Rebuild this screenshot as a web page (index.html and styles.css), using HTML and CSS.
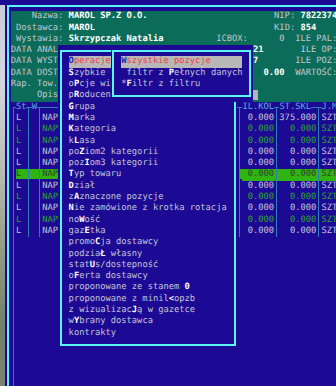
FILE: index.html
```html
<!DOCTYPE html>
<html lang="pl">

<head>
    <meta charset="UTF-8">
    <meta name="viewport" content="width=device-width, initial-scale=1.0">
    <title>Towary</title>
    <link rel="stylesheet" href="styles.css">
</head>

<body>
    <div class="screen">
        <div class="frame">
            <!-- naglowek dokumentu -->
            <div class="info">
                <div class="row">    <span>Nazwa:</span> <b>MAROL SP.Z O.O.</b>                        <span>NIP:</span> <b>7822374</b></div>
                <div class="row"> <span>Dostawca:</span> <b>MAROL</b>                                  <span>KID:</span> <b>854</b></div>
                <div class="row"> <span>Wystawia:</span> <b>Skrzypczak Natalia</b>          <span>ICBOX:</span>      <span>0</span>  <span>ILE PAL:</span></div>
                <div class="row"><span>DATA ANAL</span>                                     <b>21</b>       <span>ILE OP:</span></div>
                <div class="row"><span>DATA WYST</span>                                     <b>7</b>       <span>ILE POZ:</span></div>
                <div class="row"><span>DATA DOST</span>                                       <b>0.00</b>  <span>WARTOŚĆ:</span></div>
                <div class="row"><span>Rap. Tow.</span></div>
                <div class="row">     <span>Opis</span>                                     <span class="cur"> </span></div>
            </div>

            <!-- lista pozycji -->
            <div class="lower">
                <div class="table">
                    <div class="row thead"> <span class="th">St</span> <span class="th">W</span>                                       <span class="th">IL.KOL</span> <span class="th">ST.SKL</span>  <span class="th">J.M</span></div>
                    <div class="row"> <span>L    NAP</span>                                    <span>0.000 375.000 SZT</span></div>
                    <div class="row ok"> <span>L    NAP</span>                                    <span>0.000   0.000 SZT</span></div>
                    <div class="row ok"> <span>L    NAP</span>                                    <span>0.000   0.000 SZT</span></div>
                    <div class="row"> <span>L    NAP</span>                                    <span>0.000   0.000 SZT</span></div>
                    <div class="row"> <span>L    NAP</span>                                    <span>0.000   0.000 SZT</span></div>
                    <div class="row sel"> <span class="hi">L    NAP</span>                                  <span class="half"> </span><span class="hi"> 0.000   0.000 SZT</span></div>
                    <div class="row"> <span>L    NAP</span>                                    <span>0.000   0.000 SZT</span></div>
                    <div class="row ok"> <span>L    NAP</span>                                    <span>0.000   0.000 SZT</span></div>
                    <div class="row"> <span>L    NAP</span>                                    <span>0.000   0.000 SZT</span></div>
                    <div class="row ok"> <span>L    NAP</span>                                    <span>0.000   0.000 SZT</span></div>
                    <div class="row"> <span>L    NAP</span>                                    <span>0.000   0.000 SZT</span></div>
                </div>
            </div>
        </div>

        <!-- menu Operacje -->
        <div class="menu">
            <div class="box">
                <div class="mrow hl"><span class="hk">O</span>peracje</div>
                <div class="mrow"><b>S</b>zybkie</div>
                <div class="mrow">o<b>P</b>cje wi</div>
                <div class="mrow">p<b>R</b>oducen</div>
                <div class="mrow"><b>G</b>rupa</div>
                <div class="mrow"><b>M</b>arka</div>
                <div class="mrow"><b>K</b>ategoria</div>
                <div class="mrow">k<b>L</b>asa</div>
                <div class="mrow">po<b>Z</b>iom2 kategorii</div>
                <div class="mrow">poz<b>I</b>om3 kategorii</div>
                <div class="mrow"><b>T</b>yp towaru</div>
                <div class="mrow"><b>D</b>ział</div>
                <div class="mrow">z<b>A</b>znaczone pozycje</div>
                <div class="mrow"><b>N</b>ie zamówione z krotka rotacja</div>
                <div class="mrow">no<b>W</b>ość</div>
                <div class="mrow">gaz<b>E</b>tka</div>
                <div class="mrow">promo<b>C</b>ja dostawcy</div>
                <div class="mrow">podzia<b>Ł</b> własny</div>
                <div class="mrow">stat<b>U</b>s/dostepność</div>
                <div class="mrow">o<b>F</b>erta dostawcy</div>
                <div class="mrow">proponowane ze stanem <b>0</b></div>
                <div class="mrow">proponowane z minil<b>&lt;</b>opzb</div>
                <div class="mrow">z wizualizac<b>J</b>ą w gazetce</div>
                <div class="mrow">w<b>Y</b>brany dostawca</div>
                <div class="mrow">kontrakty</div>
            </div>
        </div>

        <!-- podmenu -->
        <div class="menu sub">
            <div class="box">
                <div class="mrow hl"><span class="hk">W</span>szystkie pozycje</div>
                <div class="mrow"> filtr z <b>P</b>ełnych danych</div>
                <div class="mrow">*<b>F</b>iltr z filtru</div>
            </div>
        </div>
    </div>
</body>

</html>
```

FILE: styles.css
```css
* {
    margin: 0;
    padding: 0;
    box-sizing: border-box;
}

:root {
    --cw: 5.27px;
    --rh: 11.3px;
    --navy: #1d0a94;
    --teal: #0c6c5a;
    --cyan: #5cf4f4;
    --text: #c4c4d4;
    --line: #2f7cb8;
    --head: #58aee0;
    --ok: #2aa52a;
    --sel: #30b412;
}

body {
    width: 336px;
    height: 386px;
    overflow: hidden;
    background: linear-gradient(to bottom, var(--navy) 0, var(--navy) 4.6px, #c9ccd8 4.6px, #d4d6de 80px, #b8bcb4 170px, #8e987e 260px, #72806a 330px, #7b8272 386px);
}

.screen {
    position: relative;
    display: flex;
    flex-direction: column;
    width: 330.6px;
    height: 386px;
    margin-left: 5.4px;
    padding: 4.65px 0 0 1.6px;
    overflow: hidden;
    background-color: var(--navy);
    color: var(--text);
    font: 8.75px/11.3px "DejaVu Sans Mono", monospace;
    text-rendering: geometricPrecision;
}

.frame {
    flex: 1;
    display: flex;
    flex-direction: column;
    border-top: 2px solid var(--cyan);
    border-left: 2px solid var(--cyan);
    padding: 4.65px 0 0 1.67px;
}

.row,
.mrow {
    height: var(--rh);
    white-space: pre;
}

b {
    color: #fff;
    font-weight: bold;
}

/* naglowek */
.info {
    background-color: var(--teal);
}

.info .row {
    color: #c2c8d0;
}

.cur {
    background-color: #b4b4b4;
}

/* tabela */
.lower {
    flex: 1;
    background: linear-gradient(var(--line), var(--line)) 2px 5.65px / 1.3px 100% no-repeat;
}

.table {
    position: relative;
}

.table::after {
    content: "";
    position: absolute;
    top: 5.65px;
    right: 0;
    bottom: 0;
    left: 0;
    pointer-events: none;
    background:
        linear-gradient(var(--line), var(--line)) 17.8px 0 / 1.3px 100% no-repeat,
        linear-gradient(var(--line), var(--line)) 28.35px 0 / 1.3px 100% no-repeat,
        linear-gradient(var(--line), var(--line)) 228.6px 0 / 1.3px 100% no-repeat,
        linear-gradient(var(--line), var(--line)) 265.5px 0 / 1.3px 100% no-repeat,
        linear-gradient(var(--line), var(--line)) 307.65px 0 / 1.3px 100% no-repeat;
}

.thead {
    background: linear-gradient(var(--line), var(--line)) 2px 5px / 100% 1.3px no-repeat;
}

.th {
    background-color: var(--navy);
    color: var(--head);
}

.ok {
    color: var(--ok);
}

.sel {
    color: #34402c;
}

.hi {
    background-color: var(--sel);
}

.sel .hi:last-child {
    display: inline-block;
    width: 100px;
}

.half {
    background: linear-gradient(to right, transparent 50%, var(--sel) 50%);
}

/* menu */
.menu {
    position: absolute;
    left: 52.7px;
    top: 45.2px;
    width: 179.18px;
    height: 305.1px;
    padding: 4.65px 1.6px;
    background-color: var(--navy);
}

.menu.sub {
    left: 105.4px;
    width: 142.29px;
    height: 56.5px;
}

.box {
    height: 100%;
    border: 2px solid var(--cyan);
    padding: 4.65px 0 0 6.94px;
}

.hl {
    margin-right: 1.7px;
    background-color: #b8b8b8;
    color: #ee4040;
}

.sub .hl {
    margin-right: 7px;
}

.hk {
    color: #2424c0;
    font-weight: bold;
}
```
